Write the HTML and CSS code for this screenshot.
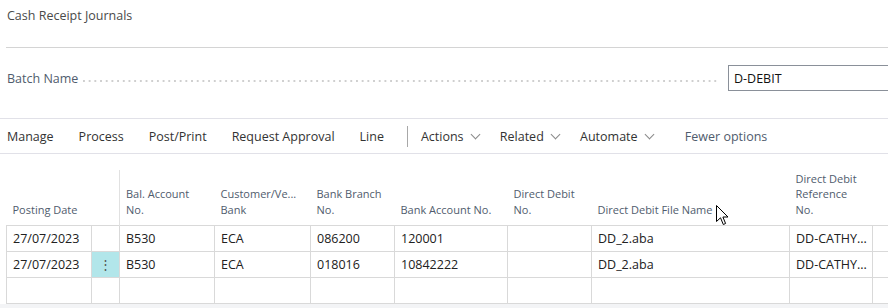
FILE: index.html
```html
<!DOCTYPE html>
<html lang="en">
<head>
  <meta charset="UTF-8" />
  <meta name="viewport" content="width=device-width, initial-scale=1.0" />
  <title>Cash Receipt Journals</title>
  <link rel="stylesheet" href="styles.css">
</head>
<body>
  <div class="page">
    <div class="title">Cash Receipt Journals</div>
    <div class="rule"></div>

    <div class="field-row">
      <label class="caption">Batch Name</label>
      <span class="leader"></span>
      <input class="field" type="text" value="D-DEBIT" />
    </div>

    <nav class="actionbar">
      <span class="action">Manage</span>
      <span class="action">Process</span>
      <span class="action">Post/Print</span>
      <span class="action">Request Approval</span>
      <span class="action">Line</span>
      <span class="sep"></span>
      <span class="action menu">Actions <span class="chev"></span></span>
      <span class="action menu">Related <span class="chev"></span></span>
      <span class="action menu">Automate <span class="chev"></span></span>
      <span class="action fewer">Fewer options</span>
    </nav>

    <table class="grid">
      <colgroup>
        <col class="c-date">
        <col class="c-dots">
        <col class="c-bal">
        <col class="c-cust">
        <col class="c-branch">
        <col class="c-acc">
        <col class="c-ddno">
        <col class="c-file">
        <col class="c-ref">
        <col class="c-rest">
      </colgroup>
      <thead>
        <tr>
          <th>Posting Date</th>
          <th></th>
          <th class="split">Bal. Account<br>No.</th>
          <th>Customer/Ve...<br>Bank</th>
          <th>Bank Branch<br>No.</th>
          <th>Bank Account No.</th>
          <th>Direct Debit<br>No.</th>
          <th>Direct Debit File Name</th>
          <th>Direct Debit<br>Reference<br>No.</th>
          <th></th>
        </tr>
      </thead>
      <tbody>
        <tr>
          <td>27/07/2023</td>
          <td></td>
          <td>B530</td>
          <td>ECA</td>
          <td>086200</td>
          <td>120001</td>
          <td></td>
          <td>DD_2.aba</td>
          <td>DD-CATHY...</td>
          <td></td>
        </tr>
        <tr>
          <td>27/07/2023</td>
          <td class="selected">&#8942;</td>
          <td>B530</td>
          <td>ECA</td>
          <td>018016</td>
          <td>10842222</td>
          <td></td>
          <td>DD_2.aba</td>
          <td>DD-CATHY...</td>
          <td></td>
        </tr>
        <tr class="empty">
          <td></td><td></td><td></td><td></td><td></td>
          <td></td><td></td><td></td><td></td><td></td>
        </tr>
      </tbody>
    </table>
    <div class="footer"></div>

    <svg class="cursor" width="13" height="21" viewBox="0 0 13 21">
      <path d="M0.5 0.5 L0.5 16.5 L4.5 12.8 L7.3 19.5 L9.6 18.5 L6.9 12 L12 12 Z" fill="#fff" stroke="#000" stroke-width="1" stroke-linejoin="round"/>
    </svg>
  </div>
</body>
</html>
```

FILE: styles.css
```css
body {
  margin: 0;
  font-family: "Open Sans", "Noto Sans", Arial, sans-serif;
  background: #fff;
  color: #212121;
}
.page {
  position: relative;
  width: 888px;
  height: 308px;
  overflow: hidden;
}
.title {
  padding: 7px 0 0 7px;
  height: 23px;
  font-size: 12.5px;
  color: #4a4a4a;
}
.rule {
  margin: 17px 0 0 6px;
  border-top: 1px solid #d4d4d4;
}
.field-row {
  display: flex;
  align-items: center;
  height: 26px;
  margin-top: 17px;
  padding-left: 7px;
}
.caption {
  font-size: 12.5px;
  color: #505c6d;
  white-space: nowrap;
}
.leader {
  flex: 1;
  height: 2px;
  margin: 5px 9px 0 5px;
  background-image: linear-gradient(to right, #cfcfcf 0 2px, transparent 2px);
  background-size: 5.7px 2px;
  background-repeat: repeat-x;
}
.field {
  width: 160px;
  height: 26px;
  box-sizing: border-box;
  border: 1px solid #8a9099;
  border-right: none;
  padding: 0 0 0 5px;
  font-family: inherit;
  font-size: 12.5px;
  color: #111;
  outline: none;
}
.actionbar {
  display: flex;
  align-items: center;
  height: 34px;
  margin: 27px 0 0 0;
  padding-left: 7px;
  border-top: 1px solid #e1e1e8;
  border-bottom: 1px solid #e1e1e8;
  font-size: 12.5px;
  color: #333;
  white-space: nowrap;
}
.action {
  margin-right: 25px;
}
.action.menu {
  margin-right: 21px;
}
.sep {
  width: 1px;
  height: 21px;
  background: #a8a8a8;
  margin: 0 13px 0 -2px;
}
.chev {
  display: inline-block;
  width: 6px;
  height: 6px;
  margin: 0 0 3px 5px;
  border-right: 1px solid #8a8a8a;
  border-bottom: 1px solid #8a8a8a;
  transform: rotate(45deg);
}
.fewer {
  margin-left: 11px;
  color: #505c6d;
}
.grid {
  margin: 16px 0 0 6px;
  border-collapse: collapse;
  table-layout: fixed;
  width: 896px;
  font-size: 12.5px;
}
.c-date { width: 85px; }
.c-dots { width: 28px; }
.c-bal { width: 95px; }
.c-cust { width: 96px; }
.c-branch { width: 84px; }
.c-acc { width: 113px; }
.c-ddno { width: 84px; }
.c-file { width: 198px; }
.c-ref { width: 83px; }
.c-rest { width: 30px; }
.grid th {
  height: 47px;
  padding: 0 0 8px 6px;
  vertical-align: bottom;
  text-align: left;
  font-weight: normal;
  font-size: 11px;
  line-height: 15.5px;
  color: #505c6d;
  white-space: nowrap;
  overflow: hidden;
}
.grid th.split {
  border-left: 1px solid #e1e1e1;
}
.grid td {
  height: 25px;
  padding: 0 0 0 6px;
  border: 1px solid #d9d9d9;
  white-space: nowrap;
  overflow: hidden;
}
.grid td.selected {
  background: #b2e6ea;
  text-align: center;
  padding: 0;
  color: #555;
}
.footer {
  height: 10px;
  background: #f3f4f6;
}
.cursor {
  position: absolute;
  left: 716px;
  top: 205px;
}
```
